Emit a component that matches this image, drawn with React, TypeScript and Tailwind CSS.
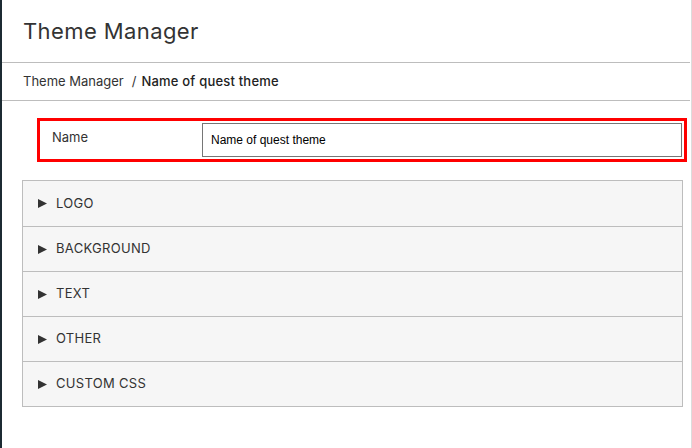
import React from "react";

const sections = ["LOGO", "BACKGROUND", "TEXT", "OTHER", "CUSTOM CSS"];

export default function App() {
  return (
    <div className="flex h-[448px] w-[692px] overflow-hidden bg-white">
      <div className="w-[2px] shrink-0 bg-[#1c2a32]" />
      <div className="flex flex-1 flex-col border-r border-[#dcdcdc] pr-[1px]">
        <div className="flex h-[63px] items-center border-b border-[#bdbdbd] pl-[21px] pt-[1px] font-['Inter',sans-serif] text-[22px] tracking-[0.4px] text-[#333]">
          Theme Manager
        </div>
        <div className="flex h-[38px] items-center border-b border-[#bdbdbd] pl-[21px] font-['Inter',sans-serif] text-[13px] text-[#333]">
          <span>Theme Manager</span>
          <span className="ml-[8px] mr-[5px]">/</span>
          <span className="font-medium tracking-[0.2px] text-[#222]">Name of quest theme</span>
        </div>
        <div className="ml-[35px] mr-[3px] mt-[17px] flex h-[44px] items-start border-[3px] border-[#ff0000] pl-[12px] pr-[2px] pt-[2px]">
          <div className="w-[150px] pt-[5px] font-['Inter',sans-serif] text-[13px] text-[#333]">Name</div>
          <div className="flex h-[34px] flex-1 items-center border border-[#767676] pl-[8px] font-['Liberation_Sans',sans-serif] text-[12px] text-black">
            Name of quest theme
          </div>
        </div>
        <div className="ml-[20px] mr-[7px] mt-[18px] border border-[#bdbdbd] bg-[#f6f6f6]">
          {sections.map((s, i) => (
            <div
              key={s}
              className={`flex h-[45px] items-center pl-[15px] font-['Inter',sans-serif] text-[13px] tracking-[0.3px] text-[#333] ${i > 0 ? "border-t border-[#bdbdbd]" : ""}`}
            >
              <svg width="9" height="9" viewBox="0 0 9 9" className="mr-[9px] shrink-0">
                <path d="M0 0 L9 4.5 L0 9 Z" fill="#333" />
              </svg>
              <span>{s}</span>
            </div>
          ))}
        </div>
      </div>
    </div>
  );
}
